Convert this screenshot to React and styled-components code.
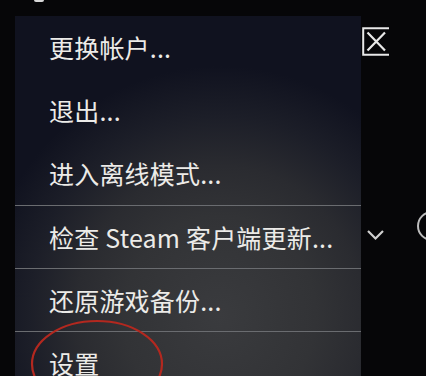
import React from "react";
import styled, { createGlobalStyle } from "styled-components";

const GlobalStyle = createGlobalStyle`
  html, body {
    margin: 0;
    padding: 0;
    background: #060608;
    overflow: hidden;
  }
  #root {
    width: 426px;
    height: 376px;
  }
`;

const Screen = styled.div`
  position: relative;
  width: 426px;
  height: 376px;
  background: #060608;
  display: flex;
  padding-top: 16px;
  padding-left: 15px;
  box-sizing: border-box;
  overflow: hidden;
  font-family: "Noto Sans CJK SC", "Noto Sans", sans-serif;
`;

const Menu = styled.div`
  width: 346px;
  height: 400px;
  flex-shrink: 0;
  display: flex;
  flex-direction: column;
  background:
    radial-gradient(ellipse 240px 250px at 205px 300px,
      #3a3b3e 0%, #323336 40%, #2a2b30 60%, #1c1e28 80%, #10121f 100%),
    #10121f;
`;

const Item = styled.div`
  height: 63px;
  flex-shrink: 0;
  box-sizing: border-box;
  display: flex;
  align-items: center;
  padding-left: 34px;
  color: #ecebe8;
  font-size: 25px;
  line-height: 1;
  letter-spacing: 0.2px;
  border-top: ${(p) => (p.$divider ? "1px solid #6a6c70" : "none")};
`;

const Side = styled.div`
  flex: 1;
  display: flex;
  flex-direction: column;
  align-items: flex-start;
  padding-left: 1px;
  color: #e6e6e6;
`;

const CloseBox = styled.div`
  margin-top: 11px;
  width: 28px;
  height: 29px;
  display: flex;
`;

const Chevron = styled.div`
  margin-top: 173px;
  margin-left: 4px;
  width: 19px;
  height: 12px;
  display: flex;
`;

const Ring = styled.div`
  position: absolute;
  left: 417px;
  top: 211px;
  width: 26px;
  height: 26px;
  border: 2px solid #bdbdbd;
  border-radius: 50%;
`;

const Nub = styled.div`
  position: absolute;
  left: 34px;
  top: 0;
  width: 10px;
  height: 2px;
  background: #d8d8d8;
  border-radius: 0 0 2px 2px;
`;

const Annotation = styled.svg`
  position: absolute;
  left: 28px;
  top: 318px;
  pointer-events: none;
`;

const items = [
  { label: "更换帐户..." },
  { label: "退出..." },
  { label: "进入离线模式..." },
  { label: "检查 Steam 客户端更新...", divider: true },
  { label: "还原游戏备份...", divider: true },
  { label: "设置", divider: true },
];

export default function App() {
  return (
    <>
      <GlobalStyle />
      <Screen>
        <Nub />
        <Menu>
          {items.map((it) => (
            <Item key={it.label} $divider={it.divider}>
              {it.label}
            </Item>
          ))}
        </Menu>
        <Side>
          <CloseBox>
            <svg width="28" height="29" viewBox="0 0 28 29" fill="none">
              <path
                d="M27 1.2H1.2V27.8H27"
                stroke="#e8e8e8"
                strokeWidth="2"
              />
              <path
                d="M5.5 5.5L23 23.5M23 5.5L5.5 23.5"
                stroke="#e8e8e8"
                strokeWidth="2.2"
              />
            </svg>
          </CloseBox>
          <Chevron>
            <svg width="19" height="12" viewBox="0 0 19 12" fill="none">
              <path
                d="M2 2L9.5 9.5L17 2"
                stroke="#d0d0d0"
                strokeWidth="2.2"
              />
            </svg>
          </Chevron>
        </Side>
        <Ring />
        <Annotation width="140" height="70" viewBox="0 0 140 70">
          <ellipse
            cx="69"
            cy="46"
            rx="65"
            ry="43"
            stroke="#b3281f"
            strokeWidth="2.2"
            fill="none"
          />
        </Annotation>
      </Screen>
    </>
  );
}
